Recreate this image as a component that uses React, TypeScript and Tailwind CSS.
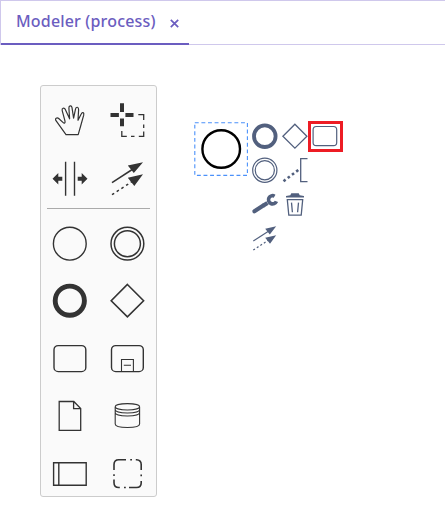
import type { ReactNode } from 'react';

type IconProps = { box: string; className: string; label: string; children: ReactNode };

function Icon({ box, className, label, children }: IconProps) {
  return (
    <button type="button" aria-label={label} className={`block ${className}`}>
      <svg viewBox={box} className="block h-full w-full" fill="none" stroke="currentColor" strokeWidth="1.4">
        {children}
      </svg>
    </button>
  );
}

function Header() {
  return (
    <header className="flex h-[45px] items-stretch border-t border-b border-[#cfc8ec]">
      <div className="relative flex w-[189px] items-center border-l border-[#cfc8ec] pl-[15px] text-[#6b5dc0]">
        <span className="-mt-[3px] w-[142px] whitespace-nowrap font-['Noto_Sans',sans-serif] text-[16px] leading-6 font-medium tracking-[0.17px]">
          Modeler (process)
        </span>
        <svg viewBox="0 0 9 9" className="mt-[2px] ml-[12px] h-[9px] w-[9px]" stroke="currentColor" strokeWidth="1.7">
          <path d="M0.8 0.8 8.2 8.2M8.2 0.8 0.8 8.2" />
        </svg>
        <span className="absolute right-0 -bottom-px left-0 h-[2px] bg-[#6b5dc0]" />
      </div>
    </header>
  );
}

function Palette() {
  return (
    <aside className="mt-10 ml-10 h-[412px] w-[117px] shrink-0 overflow-hidden rounded-[3px] border border-[#ccc] bg-[#fafafa] pt-[5px] text-[#333]">
      <div className="grid grid-cols-[58px_57px]">
        <Icon label="Hand tool" box="41 91 58 58" className="h-[58px] w-[58px]">
          <path strokeWidth="1.2" strokeLinejoin="round" d="M66 134.7H78.2L80.8 125.5 83.7 115.2C84.4 112.3 82.2 111.8 81.2 114L78 120.3 78.6 109.8C78.7 106.6 76.1 106.4 75.5 109.2L73.6 118.2 72 107.6C71.6 105.2 68.8 105.4 68.9 108L69.6 118.8 65.3 109.4C64.1 107.2 61.6 108.2 62.2 110.6L65 121.2C65.4 123 64.3 123.8 63.2 122.6L59 118.8C57 117 54.5 118.5 56 120.7Z" />
        </Icon>
        <Icon label="Lasso tool" box="99 91 57 58" className="h-[58px] w-[57px]">
          <path strokeWidth="4" d="M122 103.3V112M122 118.6V126.3M110.5 115H118.9M125.4 115H133.5" />
          <path strokeWidth="1.3" d="M138.3 114.7H143.7V120M143.7 124.5V128M143.7 131.5V136.4H138.8M134.5 136.4H131M126.8 136.4H121.8V131" />
        </Icon>
        <Icon label="Space tool" box="41 149 58 58" className="h-[58px] w-[58px]">
          <path strokeWidth="1.4" d="M65.6 161.7V195.7M74.5 161.7V195.7" />
          <path fill="currentColor" stroke="none" d="M52.5 178.7 58.3 173V176.7H62.3V180.7H58.3V184.4ZM87.5 178.7 81.7 173V176.7H77.7V180.7H81.7V184.4Z" />
        </Icon>
        <Icon label="Connect tool" box="99 149 57 58" className="h-[58px] w-[57px]">
          <path strokeWidth="1.5" d="M112 182.7 133 169" />
          <path strokeWidth="1.5" strokeDasharray="2.6 3" d="M112 194.7 132 181.6" />
          <path fill="currentColor" stroke="none" d="M143 162.2 133.8 173 127.8 165.6ZM143 174.2 134.3 186 127.8 177.7Z" />
        </Icon>
      </div>
      <hr className="mx-[6px] mt-px mb-[6px] h-px border-0 bg-[#aaa]" />
      <div className="grid grid-cols-[58px_57px]">
        <Icon label="Start event" box="41 215 58 57" className="h-[57px] w-[58px]">
          <circle cx="69.8" cy="243.7" r="16.4" strokeWidth="1.4" />
        </Icon>
        <Icon label="Intermediate event" box="99 215 57 57" className="h-[57px] w-[57px]">
          <circle cx="127.4" cy="243.7" r="16.4" strokeWidth="1.5" />
          <circle cx="127.4" cy="243.7" r="13" strokeWidth="1.5" />
        </Icon>
        <Icon label="End event" box="41 272 58 57" className="h-[57px] w-[58px]">
          <circle cx="69.8" cy="300.7" r="14.6" strokeWidth="4.9" />
        </Icon>
        <Icon label="Gateway" box="99 272 57 57" className="h-[57px] w-[57px]">
          <path strokeWidth="1.6" d="M127.4 284.5 143.6 300.7 127.4 316.9 111.2 300.7Z" />
        </Icon>
        <Icon label="Task" box="41 329 58 57" className="h-[57px] w-[58px]">
          <rect x="54" y="345.6" width="31.8" height="26" rx="4.2" strokeWidth="1.4" />
        </Icon>
        <Icon label="Sub process" box="99 329 57 57" className="h-[57px] w-[57px]">
          <rect x="111.5" y="345.6" width="31.8" height="26" rx="4.2" strokeWidth="1.4" />
          <path strokeWidth="1.1" d="M121.5 371.5V359.5H133.4V371.5M123.8 365.3H131" />
        </Icon>
        <Icon label="Data object" box="41 386 58 57" className="h-[57px] w-[58px]">
          <path strokeWidth="1.3" d="M59.2 401.5H73.8L80.7 408.5V430.3H59.2ZM73.6 401.6V408.6H80.7" />
        </Icon>
        <Icon label="Data store" box="99 386 57 57" className="h-[57px] w-[57px]">
          <ellipse cx="127.4" cy="406.8" rx="12.2" ry="3.2" strokeWidth="1.1" />
          <path strokeWidth="1.1" d="M115.2 407V424C115.2 428.6 139.6 428.6 139.6 424V407M115.2 409.6C115.2 414.1 139.6 414.1 139.6 409.6M115.2 412.6C115.2 417.1 139.6 417.1 139.6 412.6" />
        </Icon>
        <Icon label="Participant" box="41 443 58 57" className="h-[57px] w-[58px]">
          <path strokeWidth="1.4" d="M53.6 462.8H86.2V485.3H53.6ZM58.8 462.8V485.3" />
        </Icon>
        <Icon label="Group" box="99 443 57 57" className="h-[57px] w-[57px]">
          <path strokeWidth="1.6" d="M114 470V464.5Q114 459.7 118.8 459.7H126M130.2 459.7H132M135.8 459.7H136.5Q141.2 460 141.2 464.5V470M141.2 474.5V476.3M141.2 481V483Q141.2 487.5 136.5 487.5H129M125.8 487.5H124M119.8 487.5H118.8Q114 487.5 114 482.7V479.5M114 476V474.3" />
        </Icon>
      </div>
    </aside>
  );
}

function ContextPad() {
  return (
    <div className="mt-[74px] ml-[2px] grid h-[136px] grid-cols-[30px_30px_30px] grid-rows-[34px_34px_34px_34px] text-[#52607e]">
      <Icon label="Append end event" box="250 119 30 34" className="h-[34px] w-[30px]">
        <circle cx="264.8" cy="136.2" r="10.8" strokeWidth="3.8" />
      </Icon>
      <Icon label="Append gateway" box="280 119 30 34" className="h-[34px] w-[30px]">
        <path strokeWidth="1.3" d="M294.9 124.2 306.9 136.2 294.9 148.2 282.9 136.2Z" />
      </Icon>
      <div className="relative">
        <Icon label="Append task" box="310 119 30 34" className="h-[34px] w-[30px]">
          <rect x="313.1" y="126.5" width="23.6" height="19.2" rx="3.2" strokeWidth="1.2" />
        </Icon>
        <span className="absolute top-[2px] -left-[2px] h-[31px] w-[35px] border-3 border-[#ed1c24]" />
      </div>
      <Icon label="Append intermediate event" box="250 153 30 34" className="h-[34px] w-[30px]">
        <circle cx="264.8" cy="170.2" r="12.1" strokeWidth="1.2" />
        <circle cx="264.8" cy="170.2" r="9.6" strokeWidth="1.2" />
      </Icon>
      <Icon label="Append text annotation" box="280 153 30 34" className="h-[34px] w-[30px]">
        <path strokeWidth="1.3" d="M307.5 158.6H300.7V181.6H307.5" />
        <path strokeWidth="2.6" strokeDasharray="2.6 2.7" d="M283.5 181.2 299.3 169.3" />
      </Icon>
      <span />
      <Icon label="Change type" box="250 187 30 34" className="h-[34px] w-[30px]">
        <path strokeWidth="4.2" strokeLinecap="round" d="M254.4 211.3 263.3 205.6" />
        <path strokeWidth="4.2" d="M263 205.8 267.5 202.9" />
        <path strokeWidth="3.6" d="M274.6 196.2A4.1 4.1 0 1 0 276.4 201.3" />
      </Icon>
      <Icon label="Delete" box="280 187 30 34" className="h-[34px] w-[30px]">
        <path fill="currentColor" stroke="none" d="M286 197.4V196L290.3 195.2 291.3 193.2H298.7L299.7 195.2 304 196V197.4Z" />
        <path strokeWidth="1.3" d="M287.3 199.6H302.7L301.2 215.2H288.8ZM291.5 202.6 292.4 212.2M298.5 202.6 297.6 212.2" />
      </Icon>
      <span />
      <Icon label="Connect" box="250 221 30 34" className="h-[34px] w-[30px]">
        <path strokeWidth="1.2" d="M253.3 241 270 230.3" />
        <path strokeWidth="1.2" strokeDasharray="2 2.2" d="M253.3 250 269 239.8" />
        <path fill="currentColor" stroke="none" d="M276.2 226.2 269.8 234.4 265.2 228.7ZM276.2 235.2 270 243.8 265.2 237.7Z" />
      </Icon>
    </div>
  );
}

export default function App() {
  return (
    <div className="h-[511px] w-[445px] overflow-hidden bg-white">
      <Header />
      <main className="flex items-start">
        <Palette />
        <svg viewBox="194 122 54 54" className="mt-[77px] ml-[37px] block h-[54px] w-[54px] shrink-0" fill="none">
          <rect x="194.8" y="122.8" width="52.6" height="52.6" stroke="#4b91fa" strokeWidth="1.1" strokeDasharray="3.9 2.7" />
          <circle cx="221.2" cy="149" r="18.8" stroke="#000" strokeWidth="2.4" />
        </svg>
        <ContextPad />
      </main>
    </div>
  );
}
